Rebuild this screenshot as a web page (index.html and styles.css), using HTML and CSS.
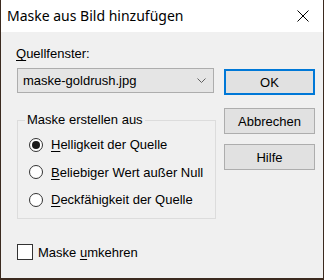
FILE: index.html
```html
<!DOCTYPE html>
<html lang="de">
<head>
<meta charset="utf-8">
<link rel="stylesheet" href="styles.css">
</head>
<body>
<div class="window">
  <div class="titlebar">
    <span class="title">Maske aus Bild hinzufügen</span>
    <svg class="close" width="12" height="12" viewBox="0 0 12 12"><path d="M0.5 0.5 L11.5 11.5 M11.5 0.5 L0.5 11.5" stroke="#000" stroke-width="1" fill="none"/></svg>
  </div>
  <div class="content">
    <div class="main">
      <div class="left">
        <div class="label"><u>Q</u>uellfenster:</div>
        <div class="combo">
          <span>maske-goldrush.jpg</span>
          <svg class="chev" width="9" height="5" viewBox="0 0 9 5"><path d="M0.5 0.5 L4.5 4.5 L8.5 0.5" stroke="#606060" stroke-width="1" fill="none"/></svg>
        </div>
        <fieldset class="group">
          <legend>Maske erstellen aus</legend>
          <div class="radio"><span class="dot on"></span><span><u>H</u>elligkeit der Quelle</span></div>
          <div class="radio"><span class="dot"></span><span><u>B</u>eliebiger Wert außer Null</span></div>
          <div class="radio"><span class="dot"></span><span><u>D</u>eckfähigkeit der Quelle</span></div>
        </fieldset>
      </div>
      <div class="buttons">
        <div class="btn default">OK</div>
        <div class="btn">Abbrechen</div>
        <div class="btn">Hilfe</div>
      </div>
    </div>
    <div class="check"><span class="box"></span><span>Maske <u>u</u>mkehren</span></div>
  </div>
</div>
</body>
</html>
```
FILE: styles.css
```css
html, body {
  margin: 0;
  padding: 0;
}
body {
  background: #3b2a1f;
  width: 324px;
  height: 280px;
  overflow: hidden;
  font-family: "Liberation Sans", Arial, sans-serif;
  font-size: 13px;
  color: #000;
}
.window {
  margin-left: 1px;
  width: 322px;
  height: 278px;
  background: #f0f0f0;
  display: flex;
  flex-direction: column;
}
.titlebar {
  height: 32px;
  background: #fff;
  display: flex;
  align-items: center;
  justify-content: space-between;
  padding: 0 14px 0 6px;
  box-sizing: border-box;
}
.title {
  font-family: "Noto Sans", "Open Sans", sans-serif;
  font-size: 14px;
  margin-top: -1px;
}
.close {
  display: block;
}
.content {
  flex: 1;
  padding: 0 0 0 15px;
  display: flex;
  flex-direction: column;
}
.main {
  display: flex;
}
.left {
  width: 200px;
  display: flex;
  flex-direction: column;
}
.label {
  margin-top: 14px;
  line-height: 16px;
}
u {
  text-decoration-thickness: 1px;
  text-underline-offset: 2px;
}
.combo {
  margin-top: 6px;
  margin-left: 1px;
  width: 197px;
  height: 25px;
  box-sizing: border-box;
  border: 1px solid #adadad;
  background: #e5e5e5;
  display: flex;
  align-items: center;
  justify-content: space-between;
  padding: 0 7px 0 5px;
}
.chev {
  display: block;
}
.group {
  margin: 19px 0 0 1px;
  width: 199px;
  height: 107px;
  box-sizing: border-box;
  border: 1px solid #dcdcdc;
  padding: 3px 0 0 11px;
}
.group legend {
  padding: 0 2px;
  margin-left: -4px;
  line-height: 16px;
}
.radio {
  display: flex;
  align-items: center;
  height: 27.5px;
  gap: 8px;
}
.dot {
  width: 14px;
  height: 14px;
  box-sizing: border-box;
  border: 1px solid #333;
  border-radius: 50%;
  background: #fff;
  display: flex;
  align-items: center;
  justify-content: center;
}
.dot.on::after {
  content: "";
  width: 8px;
  height: 8px;
  border-radius: 50%;
  background: #1a1a1a;
}
.buttons {
  margin-left: 8px;
  display: flex;
  flex-direction: column;
  gap: 10px;
  padding-top: 37px;
}
.btn {
  width: 91px;
  height: 26px;
  box-sizing: border-box;
  border: 1px solid #adadad;
  background: #e1e1e1;
  display: flex;
  align-items: center;
  justify-content: center;
}
.btn.default {
  border: 2px solid #0078d7;
  margin-bottom: 3px;
}
.check {
  margin-top: 25px;
  margin-left: 1px;
  display: flex;
  align-items: center;
  gap: 5px;
}
.box {
  width: 16px;
  height: 16px;
  box-sizing: border-box;
  border: 1px solid #333;
  background: #fff;
}
```
